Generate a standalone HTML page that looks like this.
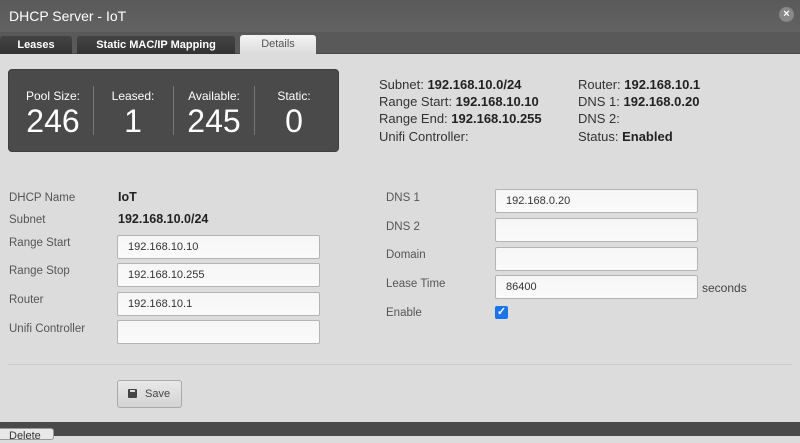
<!DOCTYPE html>
<html><head><meta charset="utf-8"><style>
*{margin:0;padding:0;box-sizing:border-box}
body{width:800px;height:436px;overflow:hidden;background:#dcdcdc;font-family:"Liberation Sans",sans-serif;position:relative}
.a{position:absolute;white-space:nowrap}
#title{left:0;top:0;width:800px;height:32px;background:linear-gradient(#5a5a5a,#626262);color:#fff;font-size:14px;line-height:32px;padding-left:9px}
#tabs{left:0;top:32px;width:800px;height:22px;background:#595959;border-bottom:1px solid #4a4a4a}
.tab{top:36px;height:18px;background:linear-gradient(#444,#333);color:#fff;font-size:11px;font-weight:bold;text-align:center;line-height:19px;border-radius:3px 3px 0 0}
.tab.on{background:linear-gradient(#f4f4f4,#dcdcdc);color:#555;font-weight:normal;top:35px;height:19px}
#box{left:8px;top:69px;width:331px;height:83px;background:#4a4a4a;border-radius:4px;border:1px solid #3e3e3e}
.st{color:#fff;text-align:center;top:89px;width:80px}
.st .l{font-size:12px}
.st .v{font-size:32px;line-height:36px}
.sep{top:86px;width:1px;height:49px;background:#777}
.inf{font-size:13px;color:#333}
.inf b{color:#222}
.lb{font-size:11.5px;color:#555}
.in{height:24px;width:203px;background:linear-gradient(#f6f6f6,#fafafa);border:1px solid #b4b4b4;border-radius:2px;font-size:11px;color:#333;line-height:22px;padding-left:10px}
.vb{font-size:12.5px;font-weight:bold;color:#222}
</style></head><body>
<div class="a" id="title">DHCP Server - IoT</div>
<div class="a" style="right:6px;top:7px;width:15px;height:15px;border-radius:50%;background:#888;color:#fff;font-size:11px;font-weight:bold;text-align:center;line-height:15px">×</div>
<div class="a" id="tabs"></div>
<div class="a tab" style="left:0;width:72px">Leases</div>
<div class="a tab" style="left:77px;width:158px">Static MAC/IP Mapping</div>
<div class="a tab on" style="left:240px;width:76px">Details</div>

<div class="a" id="box"></div>
<div class="a st" style="left:13px"><div class="l">Pool Size:</div><div class="v">246</div></div>
<div class="a sep" style="left:93px"></div>
<div class="a st" style="left:93px"><div class="l">Leased:</div><div class="v">1</div></div>
<div class="a sep" style="left:173px"></div>
<div class="a st" style="left:174px"><div class="l">Available:</div><div class="v">245</div></div>
<div class="a sep" style="left:254px"></div>
<div class="a st" style="left:254px"><div class="l">Static:</div><div class="v">0</div></div>

<div class="a inf" style="left:379px;top:77px">Subnet: <b>192.168.10.0/24</b></div>
<div class="a inf" style="left:379px;top:94px">Range Start: <b>192.168.10.10</b></div>
<div class="a inf" style="left:379px;top:111px">Range End: <b>192.168.10.255</b></div>
<div class="a inf" style="left:379px;top:129px">Unifi Controller:</div>
<div class="a inf" style="left:578px;top:77px">Router: <b>192.168.10.1</b></div>
<div class="a inf" style="left:578px;top:94px">DNS 1: <b>192.168.0.20</b></div>
<div class="a inf" style="left:578px;top:111px">DNS 2:</div>
<div class="a inf" style="left:578px;top:129px">Status: <b>Enabled</b></div>

<div class="a lb" style="left:9px;top:192px">DHCP Name</div><div class="a vb" style="left:118px;top:190px">IoT</div>
<div class="a lb" style="left:9px;top:214px">Subnet</div><div class="a vb" style="left:118px;top:212px">192.168.10.0/24</div>
<div class="a lb" style="left:9px;top:237px">Range Start</div><div class="a in" style="left:117px;top:235px">192.168.10.10</div>
<div class="a lb" style="left:9px;top:265px">Range Stop</div><div class="a in" style="left:117px;top:263px">192.168.10.255</div>
<div class="a lb" style="left:9px;top:294px">Router</div><div class="a in" style="left:117px;top:292px">192.168.10.1</div>
<div class="a lb" style="left:9px;top:323px">Unifi Controller</div><div class="a in" style="left:117px;top:320px"></div>

<div class="a lb" style="left:386px;top:192px">DNS 1</div><div class="a in" style="left:495px;top:189px">192.168.0.20</div>
<div class="a lb" style="left:386px;top:221px">DNS 2</div><div class="a in" style="left:495px;top:218px"></div>
<div class="a lb" style="left:386px;top:249px">Domain</div><div class="a in" style="left:495px;top:247px"></div>
<div class="a lb" style="left:386px;top:278px">Lease Time</div><div class="a in" style="left:495px;top:275px">86400</div>
<div class="a" style="left:702px;top:281px;font-size:12px;color:#444">seconds</div>
<div class="a lb" style="left:386px;top:307px">Enable</div>
<div class="a" style="left:495px;top:306px;width:13px;height:13px;background:#1a73e8;border-radius:2px;color:#fff;font-size:11px;line-height:13px;text-align:center;font-weight:bold">✓</div>

<div class="a" style="left:8px;top:364px;width:784px;height:1px;background:#cacaca"></div>
<div class="a" style="left:117px;top:380px;width:65px;height:28px;background:linear-gradient(#e8e8e8,#d4d4d4);border:1px solid #aaa;border-radius:3px;font-size:11px;color:#444;line-height:26px;padding-left:27px">Save</div>
<div class="a" style="left:128px;top:389px;width:9px;height:9px;background:#444;border-radius:1px"><div style="position:absolute;left:2px;top:1px;width:5px;height:2px;background:#ddd"></div></div>

<div class="a" style="left:0;top:422px;width:800px;height:14px;background:#4a4a4a"></div>
<div class="a" style="left:-4px;top:428px;width:58px;height:12px;background:#e8e8e8;border:1px solid #999;border-radius:3px;font-size:11px;color:#333;padding-left:12px;line-height:14px">Delete</div>
</body></html>
